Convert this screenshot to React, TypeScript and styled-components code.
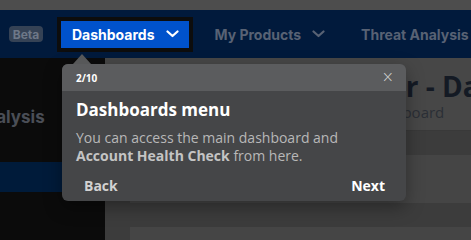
import React from "react";
import styled, { createGlobalStyle } from "styled-components";

const Global = createGlobalStyle`
  html, body { margin: 0; padding: 0; background: #3e3e3e; }
  * { box-sizing: border-box; }
`;

const Page = styled.div`
  position: relative;
  width: 471px;
  height: 240px;
  overflow: hidden;
  display: flex;
  flex-direction: column;
  background: #3e3e3e;
  font-family: "Open Sans", sans-serif;
`;

const TopStrip = styled.div`
  height: 10px;
  flex: none;
  background: #4d4d4d;
`;

const Nav = styled.nav`
  height: 48px;
  flex: none;
  display: flex;
  align-items: center;
  padding-left: 9px;
  background: #011a3c;
  font-family: Inter, "Liberation Sans", sans-serif;
  white-space: nowrap;
  overflow: hidden;
`;

const Badge = styled.span`
  flex: none;
  display: inline-flex;
  align-items: center;
  justify-content: center;
  width: 34px;
  height: 16px;
  border-radius: 4px;
  background: #354255;
  color: #6e7888;
  font-size: 12px;
  font-weight: 700;
  margin-right: 18px;
`;

const NavItem = styled.div<{ $active?: boolean }>`
  flex: none;
  display: flex;
  align-items: center;
  gap: 11px;
  height: 27px;
  padding: 0 10px 0 11px;
  font-size: 14px;
  font-weight: 700;
  color: ${(p) => (p.$active ? "#ffffff" : "#586274")};
  background: ${(p) => (p.$active ? "#0052cc" : "transparent")};
  box-shadow: ${(p) => (p.$active ? "0 0 0 4px #0d0d0d" : "none")};
  margin-right: 15px;
`;

const Chevron = ({ color }: { color: string }) => (
  <svg width="13" height="8" viewBox="0 0 13 8">
    <path d="M1.5 1.5 L6.5 6 L11.5 1.5" fill="none" stroke={color} strokeWidth="2.2" strokeLinecap="round" strokeLinejoin="round" />
  </svg>
);

const Body = styled.div`
  flex: 1;
  display: flex;
  min-height: 0;
`;

const Sidebar = styled.aside`
  width: 105px;
  flex: none;
  background: #0b0b0b;
  overflow: hidden;
`;

const SidebarInner = styled.div`
  width: 200px;
  margin-left: -86px;
  padding-top: 44px;
  display: flex;
  flex-direction: column;
`;

const SideItem = styled.div<{ $active?: boolean }>`
  height: 30px;
  display: flex;
  align-items: center;
  font-family: Inter, "Liberation Sans", sans-serif;
  font-size: 17px;
  font-weight: 700;
  color: #4a4e56;
  background: ${(p) => (p.$active ? "#001b3a" : "transparent")};
  white-space: nowrap;
`;

const Main = styled.main`
  flex: 1;
  display: flex;
  flex-direction: column;
  background: #3c3c3c;
  min-width: 0;
`;

const MainHeader = styled.header`
  height: 73px;
  flex: none;
  background: #474747;
  border-bottom: 1px solid #393939;
  padding: 11px 0 0 21px;
  white-space: nowrap;
  overflow: hidden;
`;

const Title = styled.h1`
  margin: 0;
  font-family: "Open Sans", sans-serif;
  font-size: 28px;
  line-height: 34px;
  font-weight: 700;
  color: #141a24;
`;

const Crumb = styled.div`
  font-family: "Open Sans", sans-serif;
  font-size: 15px;
  line-height: 18px;
  color: #2b2f36;
`;

const Content = styled.div`
  padding: 24px 0 0 25px;
  display: flex;
  flex-direction: column;
  gap: 24px;
`;

const Card = styled.div`
  height: 48px;
  background: #454545;
`;

const Popover = styled.div`
  position: absolute;
  left: 62px;
  top: 64px;
  width: 344px;
  height: 137px;
  border-radius: 6px;
  background: #454648;
  box-shadow: 0 6px 18px rgba(0, 0, 0, 0.35);
  display: flex;
  flex-direction: column;
  font-family: "Open Sans", sans-serif;
`;

const Arrow = styled.div`
  position: absolute;
  left: 11px;
  top: -10px;
  width: 0;
  height: 0;
  border-left: 9px solid transparent;
  border-right: 9px solid transparent;
  border-bottom: 10px solid #575859;
`;

const PopHeader = styled.div`
  height: 27px;
  flex: none;
  display: flex;
  align-items: center;
  justify-content: space-between;
  padding: 0 12px 0 14px;
  background: #5b5c5e;
  border-radius: 6px 6px 0 0;
`;

const Step = styled.span`
  font-size: 10px;
  font-weight: 700;
  color: #ffffff;
`;

const Close = styled.span`
  font-family: "DejaVu Sans", sans-serif;
  font-size: 15px;
  font-weight: 300;
  color: #d0d0d0;
  line-height: 1;
`;

const PopBody = styled.div`
  padding: 5px 14px 0;
`;

const PopTitle = styled.h2`
  margin: 0;
  font-size: 17px;
  line-height: 28px;
  font-weight: 700;
  color: #ffffff;
`;

const PopText = styled.p`
  margin: 5px 0 0;
  font-size: 14px;
  line-height: 18px;
  color: #b8b8b8;
  b { font-weight: 700; color: #c4c4c4; }
`;

const PopFooter = styled.div`
  margin-top: auto;
  display: flex;
  justify-content: space-between;
  padding: 0 13px 2px 14px;
`;

const FooterButton = styled.button<{ $primary?: boolean }>`
  border: none;
  background: transparent;
  padding: 4px 8px;
  font-family: "Open Sans", sans-serif;
  font-size: 14px;
  font-weight: 700;
  color: ${(p) => (p.$primary ? "#ffffff" : "#d2d2d2")};
`;

export default function App() {
  return (
    <Page>
      <Global />
      <TopStrip />
      <Nav>
        <Badge>Beta</Badge>
        <NavItem $active>
          Dashboards <Chevron color="#ffffff" />
        </NavItem>
        <NavItem>
          My Products <Chevron color="#586274" />
        </NavItem>
        <NavItem>Threat Analysis</NavItem>
      </Nav>
      <Body>
        <Sidebar>
          <SidebarInner>
            <SideItem>Threat Analysis</SideItem>
            <SideItem />
            <SideItem $active />
          </SidebarInner>
        </Sidebar>
        <Main>
          <MainHeader>
            <Title>Web Threat Manager - Dashboard</Title>
            <Crumb>Home / Web Threat Manager / My Dashboard</Crumb>
          </MainHeader>
          <Content>
            <Card />
            <Card />
          </Content>
        </Main>
      </Body>
      <Popover>
        <Arrow />
        <PopHeader>
          <Step>2/10</Step>
          <Close>×</Close>
        </PopHeader>
        <PopBody>
          <PopTitle>Dashboards menu</PopTitle>
          <PopText>
            You can access the main dashboard and
            <br />
            <b>Account Health Check</b> from here.
          </PopText>
        </PopBody>
        <PopFooter>
          <FooterButton>Back</FooterButton>
          <FooterButton $primary>Next</FooterButton>
        </PopFooter>
      </Popover>
    </Page>
  );
}
